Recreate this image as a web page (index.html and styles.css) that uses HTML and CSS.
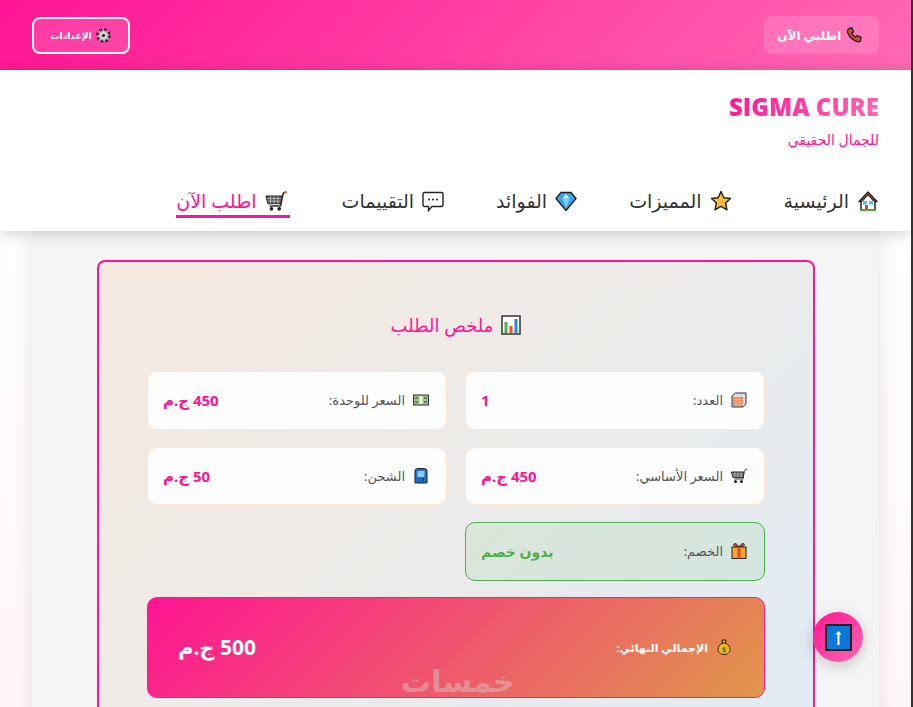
FILE: index.html
```html
<!DOCTYPE html>
<html lang="ar" dir="rtl">
<head>
    <meta charset="UTF-8">
    <title>Sigma Cure</title>
    <link rel="stylesheet" href="styles.css">
</head>
<body>
    <div class="topbar">
        <a class="orderBtn"><svg class="ico" viewBox="0 0 16 16"><path d="M3 1.500 6 1l1.500 4-1.700 1.300C6.500 8 8 9.600 9.800 10.200L11 8.700l4 1.500-.4 3.300C14 15 12 15 10 14.200 6 12.500 3 9.500 1.700 5.500 1.200 3.800 1.800 2 3 1.500Z" fill="#e0432a" stroke="#222" stroke-width="1.300" stroke-linejoin="round"/></svg> اطلبي الآن</a>
        <a class="settingsBtn"><svg class="ico-sm" viewBox="0 0 16 16"><circle cx="8" cy="8" r="6" fill="#d4d4d4"/><circle cx="8" cy="8" r="6.500" fill="none" stroke="#222" stroke-width="2.500" stroke-dasharray="2.600 2.500"/><circle cx="8" cy="8" r="5" fill="#d4d4d4" stroke="#555" stroke-width=".6"/><circle cx="8" cy="8" r="1.700" fill="#222"/></svg> الإعدادات</a>
    </div>

    <header class="siteHead">
        <div class="brand">
            <h1>SIGMA CURE</h1>
            <p>للجمال الحقيقي</p>
        </div>
        <nav class="mainNav">
            <a><svg class="navIco" viewBox="0 0 22 22"><path d="M4 10h14v10H4Z" fill="#fff" stroke="#222" stroke-width="1.500"/><path d="M11 2 2 11.500h2.500L11 5l6.500 6.500H20Z" fill="#f0623c" stroke="#222" stroke-width="1.300" stroke-linejoin="round"/><path d="M11 6 5 12v2h12v-2Z" fill="#fff"/><rect x="3" y="19.500" width="16" height="1.800" fill="#6ab04c"/><rect x="6" y="11" width="4" height="3.500" fill="#58bdf2"/><rect x="12" y="11" width="4" height="3.500" fill="#58bdf2"/><rect x="8" y="15" width="3" height="4.500" fill="#e8452c"/></svg> الرئيسية</a>
            <a><svg class="navIco" viewBox="0 0 22 22"><path d="m11 1.500 2.900 6.300 6.600.7-4.900 4.500 1.400 6.900-6-3.500-6 3.500 1.400-6.900L1.500 8.500l6.600-.7Z" fill="#fdb93c" stroke="#222" stroke-width="1.400" stroke-linejoin="round"/></svg> المميزات</a>
            <a><svg class="navIco" viewBox="0 0 22 22"><path d="M6 2.500h10l5 6-10 12-10-12Z" fill="#3aa5ec" stroke="#222" stroke-width="1.400" stroke-linejoin="round"/><path d="M7.500 8.500 11 4l3.500 4.500Z" fill="#d8f2ff"/><path d="M7.500 8.500h7L11 18Z" fill="#7fcdf6"/></svg> الفوائد</a>
            <a><svg class="navIco" viewBox="0 0 22 22"><path d="M2.500 2.500h17a1.500 1.500 0 0 1 1.500 1.500v11a1.500 1.500 0 0 1-1.500 1.500H10L6.500 20.500v-4h-4A1.500 1.500 0 0 1 1 15V4a1.500 1.500 0 0 1 1.500-1.500Z" fill="#fff" stroke="#222" stroke-width="1.400"/><circle cx="7" cy="9.500" r="1.100" fill="#333"/><circle cx="11" cy="9.500" r="1.100" fill="#333"/><circle cx="15" cy="9.500" r="1.100" fill="#333"/></svg> التقييمات</a>
            <a class="active"><svg class="navIco" viewBox="0 0 24 24"><path d="M22.500 2.500c-1.500 0-2.500.5-3 2.500L17 17.500H5" fill="none" stroke="#333" stroke-width="1.800"/><path d="M1 6.500h17.500l-1.800 8.500H3Z" fill="#555" stroke="#222"/><path d="M2 9.300h16M3 12.200h14M6 6.500V15M10 6.500V15M14 6.500V15" stroke="#ccc" stroke-width=".8"/><circle cx="7" cy="20.500" r="2" fill="#222"/><circle cx="15.500" cy="20.500" r="2" fill="#222"/><circle cx="22.500" cy="2.300" r="1.300" fill="#e0483c"/></svg> اطلب الآن</a>
        </nav>
    </header>

    <main class="page">
        <section class="sheet">
            <div class="summary">
                <h2><svg class="titleIco" viewBox="0 0 20 20"><rect x="1" y="1" width="18" height="18" fill="#fafafa" stroke="#333" stroke-width="1.500"/><rect x="3.500" y="7" width="3" height="11" fill="#4caf50"/><rect x="8.500" y="11" width="3" height="7" fill="#f4511e"/><rect x="13.500" y="4" width="3" height="14" fill="#1e88e5"/></svg> ملخص الطلب</h2>
                <div class="rows">
                    <div class="row">
                        <span class="lbl"><svg class="rowIco" viewBox="0 0 16 16"><path d="M1 4 4.500 1H15v11l-3 3H1Z" fill="#ddd" stroke="#333"/><rect x="2" y="5" width="10" height="9" fill="#e8875a"/><path d="M2 7.500h10M2 10h10M2 12.500h10M5 5v9M8 5v9" stroke="#f3c0a0" stroke-width=".6"/></svg> العدد:</span>
                        <span class="val">1</span>
                    </div>
                    <div class="row">
                        <span class="lbl"><svg class="rowIco" viewBox="0 0 16 16"><rect x=".5" y="3" width="15" height="10" fill="#a9bf95" stroke="#333"/><rect x="6.500" y="4" width="3" height="8" fill="#eef2dc"/><path d="M2 5h3v2H2ZM11 9h3v2h-3ZM11 5h3v2h-3ZM2 9h3v2H2Z" fill="#5c8a55"/></svg> السعر للوحدة:</span>
                        <span class="val">450 ج.م</span>
                    </div>
                    <div class="row">
                        <span class="lbl"><svg class="rowIco" viewBox="0 0 16 16"><path d="M15.500 1.500c-1.500 0-2 .5-2.300 2L12 11H3.500" fill="none" stroke="#333"/><path d="M.5 4h12.500l-1 5.500H2Z" fill="#666" stroke="#222"/><path d="M1 6h11.500M1.500 8h10.500M4 4v5.500M7 4v5.500M10 4v5.500" stroke="#bbb" stroke-width=".6"/><circle cx="4.500" cy="13.500" r="1.500" fill="#222"/><circle cx="10.500" cy="13.500" r="1.500" fill="#222"/><circle cx="15" cy="1.500" r="1" fill="#e0483c"/></svg> السعر الأساسي:</span>
                        <span class="val">450 ج.م</span>
                    </div>
                    <div class="row">
                        <span class="lbl"><svg class="rowIco" viewBox="0 0 16 16"><path d="M2 15V3c0-1.500 1-2.500 2.500-2.500h7C13 .5 14 1.500 14 3v12Z" fill="#1c6fc4" stroke="#222"/><rect x="4.500" y="3" width="7" height="6" fill="#8ec8f0"/><rect x="9.500" y="10" width="1.500" height="3" fill="#0d3f75"/></svg> الشحن:</span>
                        <span class="val">50 ج.م</span>
                    </div>
                    <div class="row discount">
                        <span class="lbl"><svg class="rowIco" viewBox="0 0 16 16"><path d="M5 4C2 3 2 .5 4 .5 6 .5 8 4 8 4s2-3.500 4-3.500 2 2.500-1 3.500Z" fill="#e0483c" stroke="#222" stroke-width=".8"/><rect x="1" y="4" width="14" height="11.500" fill="#f6a623" stroke="#222"/><rect x="6.500" y="4" width="3" height="11.500" fill="#e0483c"/></svg> الخصم:</span>
                        <span class="val">بدون خصم</span>
                    </div>
                </div>
                <div class="total">
                    <span class="lbl"><svg class="rowIco" viewBox="0 0 16 16"><path d="M6 1h4L9.500 4c3 1.500 4.500 4 4.500 6.500 0 3-2.500 5-6 5s-6-2-6-5C2 8 3.500 5.500 6.500 4Z" fill="#f5b31a" stroke="#222"/><path d="M6 4h4" stroke="#222"/><text x="8" y="13" font-size="7" text-anchor="middle" fill="#2a7d3a">$</text></svg> الإجمالي النهائي:</span>
                    <span class="val">500 ج.م</span>
                    <span class="mark">خمسات</span>
                </div>
            </div>
        </section>
    </main>

    <a class="toTop"><svg viewBox="0 0 27 27"><rect x="1" y="1" width="25" height="25" fill="#0a78d8" stroke="#222" stroke-width="2"/><path d="M13.500 7 10.500 10.500h2V21h2V10.500h2Z" fill="#fff"/></svg></a>
</body>
</html>
```
FILE: styles.css
```css
* {
    box-sizing: border-box;
}

html {
    height: 100%;
    overflow: hidden;
}

/* the dark line down the right edge of the window */
body {
    min-height: 100vh;
    margin: 0;
    border-right: 2px solid #333;
    font-family: "Noto Sans", "DejaVu Sans", sans-serif;
    background: linear-gradient(#fff, #fff 30%, #fff6f9);
    color: #333;
}

.topbar {
    display: flex;
    justify-content: space-between;
    align-items: center;
    height: 70px;
    padding: 0 32px;
    background: linear-gradient(135deg, #ff1493, #ff69b4);
}

.orderBtn {
    display: flex;
    align-items: center;
    gap: 5px;
    width: 115px;
    height: 38px;
    padding: 0 17px 0 0;
    border-radius: 8px;
    background: rgba(255, 255, 255, 0.15);
    color: #fff;
    font-size: 12px;
    font-weight: 700;
}

.settingsBtn {
    display: flex;
    align-items: center;
    justify-content: center;
    gap: 5px;
    width: 98px;
    height: 37px;
    border: 2px solid #fff;
    border-radius: 8px;
    background: rgba(255, 255, 255, 0.15);
    color: #fff;
    font-size: 9px;
    font-weight: 700;
}

.ico {
    width: 16px;
    height: 16px;
}

.ico-sm {
    width: 15px;
    height: 15px;
}

.siteHead {
    position: relative;
    height: 161px;
    padding: 24px 32px 0;
    background: #fff;
    box-shadow: 0 2px 15px rgba(0, 0, 0, 0.2);
}

.brand h1 {
    margin: 0;
    width: fit-content;
    font-family: "Open Sans", sans-serif;
    font-size: 24px;
    font-weight: 800;
    line-height: 26px;
    background: linear-gradient(135deg, #ff1493, #ff69b4);
    -webkit-background-clip: text;
    background-clip: text;
    color: transparent;
}

.brand p {
    margin: 11px 0 0;
    color: #ff1493;
    font-size: 14px;
    line-height: 18px;
}

.mainNav {
    display: flex;
    gap: 52px;
    margin-top: 38px;
}

.mainNav a {
    display: flex;
    align-items: center;
    gap: 8px;
    height: 31px;
    padding-bottom: 1px;
    border-bottom: 3px solid transparent;
    color: #333;
    font-size: 19px;
    line-height: 26px;
}

.mainNav a.active {
    padding-right: 3px;
    border-bottom-color: #ff1493;
    color: #ff1493;
}

.navIco {
    width: 22px;
    height: 22px;
}

.page {
    padding: 0 32px;
}

.sheet {
    padding: 29px 64px 40px 65px;
    background: #f5f5f5;
    box-shadow: 0 0 20px rgba(0, 0, 0, 0.1);
}

.summary {
    padding: 50px 48px 40px;
    border: 2px solid #ff1493;
    border-radius: 8px;
    background: linear-gradient(135deg, #f5e9e0, #ecebe9 50%, #e1ebf5);
}

.summary h2 {
    display: flex;
    justify-content: center;
    align-items: center;
    gap: 8px;
    margin: 0 0 33px;
    color: #ff1493;
    font-size: 18px;
    font-weight: 400;
    line-height: 26px;
}

.titleIco {
    width: 20px;
    height: 20px;
}

.rows {
    display: grid;
    grid-template-columns: 1fr 1fr;
    gap: 17px 18px;
}

.row {
    display: flex;
    justify-content: space-between;
    align-items: center;
    height: 58.5px;
    padding: 0 17px 0 15px;
    border: 1px solid #ffe4d0;
    border-radius: 10px;
    background: rgba(255, 255, 255, 0.9);
}

.lbl {
    display: flex;
    align-items: center;
    gap: 8px;
    color: #555;
    font-size: 13px;
}

.val {
    color: #ff1493;
    font-size: 15px;
    font-weight: 700;
}

.rowIco {
    width: 16px;
    height: 16px;
}

.discount {
    border-color: #4caf50;
    background: rgba(76, 175, 80, 0.1);
}

.discount .val {
    color: #4caf50;
    font-size: 14px;
}

.total {
    position: relative;
    display: flex;
    justify-content: space-between;
    align-items: center;
    height: 101px;
    margin-top: 16px;
    padding: 0 32px 0 30px;
    border: 1px solid #ff1493;
    border-radius: 10px;
    background: linear-gradient(135deg, #ff1493, #e0974a);
}

.total .lbl {
    color: #fff;
    font-size: 11px;
    font-weight: 700;
}

.total .val {
    color: #fff;
    font-size: 21px;
}

.mark {
    position: absolute;
    bottom: 1px;
    left: 253px;
    color: rgba(215, 205, 205, 0.45);
    font-size: 30px;
    font-weight: 700;
    line-height: 30px;
}

.toTop {
    position: fixed;
    left: 813px;
    top: 612px;
    display: flex;
    justify-content: center;
    align-items: center;
    width: 50px;
    height: 50px;
    border-radius: 50%;
    background: linear-gradient(135deg, #ff1493, #ff69b4);
    box-shadow: 0 4px 15px rgba(0, 0, 0, 0.2);
}

.toTop svg {
    width: 27px;
    height: 27px;
}
```
